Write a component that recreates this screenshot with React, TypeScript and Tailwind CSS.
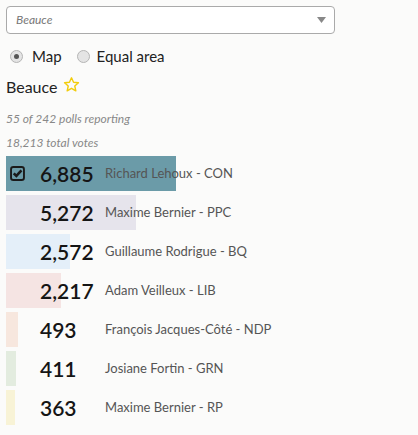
const rows = [
  { votes: "6,885", name: "Richard Lehoux - CON", width: 170, color: "bg-[#6b9ba8]", winner: true },
  { votes: "5,272", name: "Maxime Bernier - PPC", width: 130, color: "bg-[#e6e4ec]" },
  { votes: "2,572", name: "Guillaume Rodrigue - BQ", width: 64, color: "bg-[#e4eff9]" },
  { votes: "2,217", name: "Adam Veilleux - LIB", width: 55, color: "bg-[#f5e4e3]" },
  { votes: "493", name: "François Jacques-Côté - NDP", width: 12, color: "bg-[#f7e7de]" },
  { votes: "411", name: "Josiane Fortin - GRN", width: 10, color: "bg-[#e3ecdf]" },
  { votes: "363", name: "Maxime Bernier - RP", width: 9, color: "bg-[#f8f3d6]" },
];

function Radio({ checked }: { checked?: boolean }) {
  return (
    <span className="flex h-[13px] w-[13px] items-center justify-center rounded-full border border-[#b5b5b5] bg-[#e4e4e4]">
      {checked && <span className="h-[5px] w-[5px] rounded-full bg-[#555]" />}
    </span>
  );
}

export default function App() {
  return (
    <div className="min-h-[435px] w-[418px] bg-[#fbfbfa] px-[6px] pt-[6px] font-['Lato','Noto_Sans',sans-serif] text-[#222]">
      {/* Riding select */}
      <div className="flex h-[28px] w-[329px] items-center justify-between rounded-[4px] border border-[#aaa] bg-white pl-[9px] pr-[8px]">
        <span className="text-[12px] italic text-[#777]">Beauce</span>
        <svg width="9" height="6" viewBox="0 0 9 6">
          <path d="M0 0h9L4.5 6z" fill="#888" />
        </svg>
      </div>

      {/* View mode */}
      <div className="mt-[13px] flex h-[18px] items-center text-[15px] text-[#222]">
        <span className="ml-[4px]"><Radio checked /></span>
        <span className="ml-[9px]">Map</span>
        <span className="ml-[15px]"><Radio /></span>
        <span className="ml-[7px]">Equal area</span>
      </div>

      {/* Riding title */}
      <div className="mt-[12px] flex h-[20px] items-center gap-[5px] text-[16px]">
        <span>Beauce</span>
        <svg width="17" height="17" viewBox="0 0 24 24" className="-mt-[6px]">
          <path
            d="M12 2.5l2.9 6.3 6.9.7-5.2 4.6 1.5 6.8L12 17.4l-6.1 3.5 1.5-6.8L2.2 9.5l6.9-.7z"
            fill="none"
            stroke="#f2cc0c"
            strokeWidth="2"
            strokeLinejoin="round"
          />
        </svg>
      </div>

      <div className="mt-[15px] text-[12px] italic leading-[14px] text-[#888]">55 of 242 polls reporting</div>
      <div className="mt-[10px] text-[12px] italic leading-[14px] text-[#888]">18,213 total votes</div>

      {/* Results */}
      <div className="mt-[6px] flex flex-col gap-[4px]">
        {rows.map((r) => (
          <div key={r.votes} className="relative flex h-[35px] items-center">
            <div className={`absolute left-0 top-0 h-full ${r.color}`} style={{ width: r.width }} />
            <div className="relative flex w-[34px] items-center pl-[4px]">
              {r.winner && (
                <svg width="15" height="15" viewBox="0 0 16 16">
                  <rect x="1.1" y="1.1" width="13.8" height="13.8" rx="2.5" fill="none" stroke="#1a1a1a" strokeWidth="2" />
                  <path d="M4 7.8l2.8 2.8 5.4-6" fill="none" stroke="#1a1a1a" strokeWidth="2.8" />
                </svg>
              )}
            </div>
            <span className="relative w-[65px] text-[21px] font-semibold leading-none text-[#151515]">{r.votes}</span>
            <span className="relative text-[13px] text-[#555]">{r.name}</span>
          </div>
        ))}
      </div>
    </div>
  );
}
